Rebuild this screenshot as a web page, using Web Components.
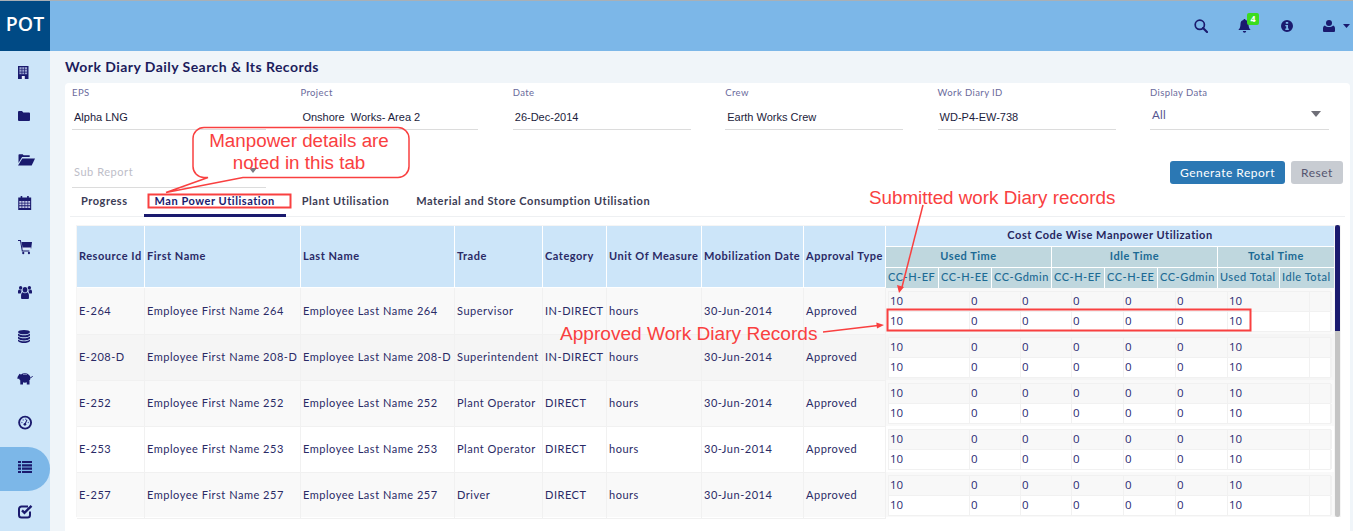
<!DOCTYPE html>
<html>
<head>
<meta charset="utf-8">
<title>Work Diary</title>
<style>
  html, body { margin: 0; height: 531px; overflow: hidden; background: #f0f5f9; }
  body { font-family: Lato, "Open Sans", sans-serif; color: #1a1a6e; }
</style>
</head>
<body>
<pot-app>
  <pot-topbar slot="top"></pot-topbar>
  <pot-sidebar slot="side"></pot-sidebar>
  <pot-card>
    <div slot="fields">
      <pot-field label="EPS">Alpha LNG</pot-field>
      <pot-field label="Project">Onshore&nbsp; Works- Area 2</pot-field>
      <pot-field label="Date">26-Dec-2014</pot-field>
      <pot-field label="Crew">Earth Works Crew</pot-field>
      <pot-field label="Work Diary ID">WD-P4-EW-738</pot-field>
      <pot-field label="Display Data" select>All</pot-field>
    </div>
    <pot-subreport slot="sub"></pot-subreport>
    <pot-button slot="actions" kind="primary">Generate Report</pot-button>
    <pot-button slot="actions" kind="plain">Reset</pot-button>
    <pot-tabs slot="tabs"></pot-tabs>
    <manpower-table slot="table"></manpower-table>
  </pot-card>
</pot-app>
<pot-notes></pot-notes>

<script>
const NAVY = '#1a1a6e';

class PotApp extends HTMLElement {
  constructor() {
    super();
    this.attachShadow({ mode: 'open' });
    this.shadowRoot.innerHTML = `
      <style>
        :host { display: grid; grid-template-columns: 50px 1fr; grid-template-rows: 1px 50px 480px; width: 1353px; height: 531px; }
        .strip { grid-column: 1 / 3; background: #a9b0b6; }
        .top { grid-column: 1 / 3; display: block; }
        .main { padding: 0 3px 0 15px; min-width: 0; }
        h1 { margin: 0; height: 32px; line-height: 32px; font-size: 14px; font-weight: 700; letter-spacing: .45px; color: #1c1c5c; }
      </style>
      <div class="strip"></div>
      <div class="top"><slot name="top"></slot></div>
      <slot name="side"></slot>
      <div class="main">
        <h1>Work Diary Daily Search &amp; Its Records</h1>
        <slot></slot>
      </div>`;
  }
}

class PotTopbar extends HTMLElement {
  constructor() {
    super();
    this.attachShadow({ mode: 'open' });
    this.shadowRoot.innerHTML = `
      <style>
        :host { display: flex; align-items: center; height: 50px; background: #7cb7e8; }
        .logo { width: 50px; height: 50px; background: #004a85; color: #fff; font: 600 19.500px/46px "Open Sans", sans-serif; text-align: center; flex: none; }
        .icons { margin-left: auto; display: flex; align-items: center; height: 50px; padding-right: 3px; }
        svg { display: block; fill: ${NAVY}; }
        .i { position: relative; }
        .search, .bell, .info { margin-right: 30px; }
        .user { margin-right: 8px; }
        .badge { position: absolute; left: 9px; top: -6px; width: 12px; height: 12px; border-radius: 2px; background: #3bdc1e; color: #fff; font: 700 9px/12px "Open Sans", sans-serif; text-align: center; }
      </style>
      <div class="logo">POT</div>
      <div class="icons">
        <div class="i search"><svg width="14" height="14" viewBox="0 0 14 14"><circle cx="5.8" cy="5.8" r="4.6" fill="none" stroke="${NAVY}" stroke-width="1.7"/><path d="M9 9l4 4" stroke="${NAVY}" stroke-width="2.1" stroke-linecap="round"/></svg></div>
        <div class="i bell"><svg width="13" height="14" viewBox="0 0 13 14"><path d="M6.5 0c.6 0 1 .4 1 1 2 .4 3 1.9 3 4 0 3.2.9 4.7 2.2 6H.3c1.300-1.300 2.200-2.800 2.200-6 0-2.100 1-3.600 3-4 0-.6.400-1 1-1z"/><path d="M4.800 12h3.400a1.700 1.700 0 0 1-3.400 0z"/></svg><span class="badge">4</span></div>
        <div class="i info"><svg width="12" height="12" viewBox="0 0 12 12"><path fill-rule="evenodd" d="M6 0a6 6 0 1 1 0 12A6 6 0 0 1 6 0zM4.800 2v1.800h2.400V2zM4.300 5v1.300h.9v2.200h-.9V10h3.500V8.500h-.8V5z"/></svg></div>
        <div class="i user"><svg width="12" height="12" viewBox="0 0 12 12"><circle cx="6" cy="3" r="3"/><path d="M1.800 5.400C3 6.700 4.300 7 6 7s3-.3 4.200-1.600c1.100.4 1.800 1.500 1.800 3.200V11a1 1 0 0 1-1 1H1a1 1 0 0 1-1-1V8.600c0-1.700.7-2.800 1.800-3.200z"/></svg></div>
        <div class="i"><svg width="7" height="4" viewBox="0 0 7 4"><path d="M0 0h7L3.500 4z"/></svg></div>
      </div>`;
  }
}

const SIDE_ICONS = [
  // building
  `<path d="M2 2h10.500v13H2z"/><path fill="#9aa3d0" d="M3.400 3.200h7.700v7H3.400z"/><path fill="${NAVY}" d="M5.600 3.200h.7v7h-.7zM8.200 3.200h.7v7h-.7zM3.400 5.400h7.700v.7H3.400zM3.400 7.700h7.700v.7H3.400z"/><path fill="#e8eefa" d="M5.800 12h3v3h-3z"/>`,
  // folder
  `<path d="M3 3h3l1.300 1.500H13a1 1 0 0 1 1 1V12a1 1 0 0 1-1 1H3a1 1 0 0 1-1-1V4a1 1 0 0 1 1-1z"/>`,
  // folder-open
  `<g transform="translate(2.500 .5)"><path d="M0 4V2.600a.8.800 0 0 1 .8-.8h3.400l.9 1h6.100v1.800H3.600L0 10.500z"/><path d="M4.300 6H17l-3.300 7H0z" transform="translate(-.5 0)"/></g>`,
  // calendar
  `<g transform="translate(1.500 -1) scale(.9 1)"><path d="M.8 2.500h14.400V15H.8z"/><path d="M3.500 1h1.800v3H3.500zM10.700 1h1.800v3h-1.800z"/><path fill="#c5cbe8" d="M2 6h2.500v1.700H2zM5.300 6h2.500v1.700H5.300zM8.600 6h2.500v1.700H8.600zM11.900 6H14v1.700h-2.100zM2 8.600h2.500v1.700H2zM5.300 8.600h2.500v1.700H5.300zM8.600 8.600h2.500v1.700H8.600zM11.900 8.600H14v1.700h-2.100zM2 11.200h2.500v1.700H2zM5.300 11.200h2.500v1.700H5.300zM8.600 11.200h2.500v1.700H8.600zM11.900 11.200H14v1.700h-2.100z"/></g>`,
  // cart
  `<g transform="translate(2 -.5) scale(.875 1)"><path d="M0 1h2.800l2.100 10.500H13" fill="none" stroke="${NAVY}" stroke-width="1.200"/><path d="M4 2.500h12l-1 6.800H5.400z"/><path fill="#dfe9f8" d="M5.300 8h9.500l-.3 1.700H5.600z"/><circle cx="6" cy="13.500" r="1.200"/><circle cx="12.500" cy="13.500" r="1.200"/></g>`,
  // users
  `<g transform="translate(2 0) scale(.875 1)"><circle cx="8" cy="5.800" r="2.700"/><circle cx="3" cy="3.800" r="1.900"/><circle cx="13" cy="3.800" r="1.900"/><path d="M3.500 14v-2.500c0-2 1-3 2-3.200.7.600 1.500.9 2.500.9s1.800-.3 2.500-.9c1 .2 2 1.200 2 3.200V14a1 1 0 0 1-1 1h-7a1 1 0 0 1-1-1z"/><path d="M0 9V7.500c0-1 .6-1.800 1.400-2 .4.400 1 .7 1.600.7h1C3.800 7 4 8 3 9.500H1a1 1 0 0 1-1-.5zM16 9V7.500c0-1-.6-1.800-1.400-2-.4.400-1 .7-1.600.7h-1c.2.800 0 1.800 1 3.300h2a1 1 0 0 0 1-.5z"/></g>`,
  // database
  `<g transform="translate(0 1.500) scale(1 .87)"><ellipse cx="8" cy="3" rx="6" ry="2.500"/><path d="M2 4.500C3 6 5.500 6.500 8 6.500s5-.5 6-2v2.300C13 8.300 10.500 9 8 9s-5-.7-6-2.200zM2 8C3 9.500 5.500 10 8 10s5-.5 6-2v2.300c-1 1.500-3.500 2.200-6 2.200s-5-.7-6-2.200zM2 11.500c1 1.500 3.500 2 6 2s5-.5 6-2v1.600c-1 1.500-3.500 2.400-6 2.400s-5-.9-6-2.400z"/></g>`,
  // piggy bank
  `<g transform="translate(.5 -1.500)"><ellipse cx="8.300" cy="7.500" rx="5.700" ry="4.700"/><path d="M3 3.300l3 1.700-2.500 3-2.500.6V6.500zM3.800 10.500h2.700v3.500H3.800zM10.300 10.500H13V14h-2.700z"/><path d="M14 7c1.200 0 1.800-.6 2-1.500" fill="none" stroke="${NAVY}" stroke-width="1"/><path fill="#9aa3d0" d="M6.500 3.700h4v.7h-4z"/></g>`,
  // tachometer
  `<g transform="translate(1.500 -1) scale(.95)"><circle cx="8" cy="8" r="6.300" fill="none" stroke="${NAVY}" stroke-width="2"/><path d="M8 9.500L10 5" stroke="${NAVY}" stroke-width="1.100"/><circle cx="7.800" cy="9.800" r="1.400"/><g fill="#5a68b8"><circle cx="4.600" cy="8" r=".8"/><circle cx="6" cy="5.200" r=".8"/><circle cx="8.600" cy="4.400" r=".8"/><circle cx="11.400" cy="8" r=".8"/></g></g>`,
  // list
  `<path d="M2 1h3v2.100H2zM6 1h10v2.100H6zM2 4.300h3v2.100H2zM6 4.300h10v2.100H6zM2 7.600h3v2.100H2zM6 7.600h10v2.100H6zM2 10.900h3V13H2zM6 10.900h10V13H6z"/>`,
  // check-square
  `<g transform="translate(1.500 -.5)"><path d="M12.500 8v3.500A2.500 2.500 0 0 1 10 14H4a2.500 2.500 0 0 1-2.500-2.500v-6A2.500 2.500 0 0 1 4 3h6.500" fill="none" stroke="${NAVY}" stroke-width="2"/><path d="M4.500 6.800L7 9.300 14 2.300" fill="none" stroke="${NAVY}" stroke-width="2.400"/></g>`
];

class PotSidebar extends HTMLElement {
  constructor() {
    super();
    this.attachShadow({ mode: 'open' });
    const items = SIDE_ICONS.map((p, i) =>
      `<div class="item${i === 9 ? ' on' : ''}"><svg width="16" height="16" viewBox="0 0 16 16">${p}</svg></div>`).join('');
    this.shadowRoot.innerHTML = `
      <style>
        :host { display: block; background: #cce5f9; overflow: hidden; }
        .item { height: 44px; box-sizing: border-box; padding: 13px 0 0 16px; }
        .on { background: #7cb7e8; border-radius: 0 22px 22px 0; }
        svg { display: block; fill: ${NAVY}; overflow: visible; }
      </style>
      ${items}`;
  }
}

class PotCard extends HTMLElement {
  constructor() {
    super();
    this.attachShadow({ mode: 'open' });
    this.shadowRoot.innerHTML = `
      <style>
        :host { display: block; background: #fff; border-radius: 4px 4px 0 0; height: 448px; box-sizing: border-box; padding: 3px 7px 0 7px; }
        ::slotted([slot=fields]) { display: grid; grid-template-columns: 194px 178px 178px 178px 178px 179px; column-gap: 34.400px; }
        .row { display: flex; height: 58px; padding-top: 31px; box-sizing: border-box; }
        .actions { margin-left: auto; display: flex; gap: 6px; height: 23px; }
      </style>
      <slot name="fields"></slot>
      <div class="row">
        <slot name="sub"></slot>
        <div class="actions"><slot name="actions"></slot></div>
      </div>
      <slot name="tabs"></slot>
      <slot name="table"></slot>`;
  }
}

class PotField extends HTMLElement {
  constructor() {
    super();
    this.attachShadow({ mode: 'open' });
    const sel = this.hasAttribute('select');
    this.shadowRoot.innerHTML = `
      <style>
        :host { display: block; position: relative; }
        .l { height: 12px; font: 400 9.500px/14px Lato, sans-serif; letter-spacing: .4px; color: #6a6a9c; }
        .v { height: 32px; box-sizing: border-box; border-bottom: 1px solid #dcdcdc; padding: 7px 0 0 2px; font: 400 11px/24px "${sel ? 'Lato' : 'Liberation Sans'}", sans-serif; color: ${sel ? '#55558f' : '#1c1c3c'}; ${sel ? 'line-height:20px;font-size:11.500px;letter-spacing:.3px;' : ''} }
        .c { position: absolute; right: 8px; top: 25px; width: 0; height: 0; border: 5px solid transparent; border-top: 6px solid #6f6f78; border-bottom: 0; }
      </style>
      <div class="l">${this.getAttribute('label')}</div>
      <div class="v"><slot></slot></div>
      ${sel ? '<div class="c"></div>' : ''}`;
  }
}

class PotSubreport extends HTMLElement {
  constructor() {
    super();
    this.attachShadow({ mode: 'open' });
    this.shadowRoot.innerHTML = `
      <style>
        :host { display: block; position: relative; width: 194px; height: 27px; box-sizing: border-box; border-bottom: 1px solid #dcdcdc; padding-left: 2px; font: 400 11px/22px Lato, sans-serif; letter-spacing: .55px; color: #bdbdc8; }
        i { position: absolute; left: 177px; top: 7px; width: 0; height: 0; border: 4px solid transparent; border-top: 5px solid #7a7a82; border-bottom: 0; }
      </style>
      Sub Report<i></i>`;
  }
}

class PotButton extends HTMLElement {
  constructor() {
    super();
    this.attachShadow({ mode: 'open' });
    const primary = this.getAttribute('kind') === 'primary';
    this.shadowRoot.innerHTML = `
      <style>
        :host { display: block; height: 23px; border-radius: 3px; box-sizing: border-box; text-align: center; font: 400 12px/23px Lato, sans-serif; letter-spacing: .5px;
          width: ${primary ? 115 : 52}px; background: ${primary ? '#2b78b4' : '#c8ccd2'}; color: ${primary ? '#fff' : '#55556f'}; }
      </style>
      <slot></slot>`;
  }
}

class PotTabs extends HTMLElement {
  constructor() {
    super();
    this.attachShadow({ mode: 'open' });
    const tabs = ['Progress', 'Man Power Utilisation', 'Plant Utilisation', 'Material and Store Consumption Utilisation'];
    this.shadowRoot.innerHTML = `
      <style>
        :host { display: flex; gap: 5px; margin: 0 -2px 0 -2px; height: 29px; box-sizing: border-box; border-bottom: 1px solid #eef0f2; }
        div { height: 29px; box-sizing: border-box; padding: 0 11px; font: 700 11px/26px Lato, sans-serif; letter-spacing: .54px; color: #3c3c55; }
        .on { color: ${NAVY}; border-bottom: 3px solid ${NAVY}; }
      </style>
      ${tabs.map((t, i) => `<div class="${i === 1 ? 'on' : ''}">${t}</div>`).join('')}`;
  }
}

const PEOPLE = [
  ['E-264', '264', 'Supervisor', 'IN-DIRECT', '#f9f9f9'],
  ['E-208-D', '208-D', 'Superintendent', 'IN-DIRECT', '#f5f5f5'],
  ['E-252', '252', 'Plant Operator', 'DIRECT', '#f9f9f9'],
  ['E-253', '253', 'Plant Operator', 'DIRECT', '#ffffff'],
  ['E-257', '257', 'Driver', 'DIRECT', '#f9f9f9']
];

class ManpowerTable extends HTMLElement {
  constructor() {
    super();
    this.attachShadow({ mode: 'open' });
    const heads = ['Resource Id', 'First Name', 'Last Name', 'Trade', 'Category', 'Unit Of Measure', 'Mobilization Date', 'Approval Type'];
    const codes = ['CC-H-EF', 'CC-H-EE', 'CC-Gdmin', 'CC-H-EF', 'CC-H-EE', 'CC-Gdmin', 'Used Total', 'Idle Total'];
    const line = `<div class="nr">${['10', '0', '0', '0', '0', '0', '10', ''].map(v => `<span>${v}</span>`).join('')}</div>`;
    const rows = PEOPLE.map((p, i) => `
      <div class="row" style="background:${p[4]}${i === 4 ? ';height:45px' : ''}">
        <div>${p[0]}</div><div>Employee First Name ${p[1]}</div><div>Employee Last Name ${p[1]}</div>
        <div>${p[2]}</div><div>${p[3]}</div><div>hours</div><div>30-Jun-2014</div><div>Approved</div>
        <div class="nest">${line}${line}</div>
      </div>`).join('');
    this.shadowRoot.innerHTML = `
      <style>
        :host { display: flex; margin: 8px 0 0 4px; width: 1265px; height: 292px; box-sizing: border-box; padding: 1px 1px 0 1px; background: #f5f5f5; font: 400 11px/16px Lato, sans-serif; letter-spacing: .52px; color: #2a2a66; }
        .tb { width: 1257px; flex: none; }
        .head, .row { display: grid; grid-template-columns: 68px 156px 154px 88px 64px 95px 102px 82px 448px; }
        .head { height: 62px; background: #fff; }
        .head > .h { background: #cce5f9; margin: 0 1px 1px 0; padding-left: 2px; line-height: 60px; font-weight: 700; white-space: nowrap; color: #2a2a66; overflow: visible; }
        .group { display: grid; grid-template-rows: 20px 20px 20px; row-gap: 1px; }
        .title { background: #cce5f9; text-align: center; font-weight: 700; line-height: 17px; color: #26265f; }
        .g3 { display: grid; grid-template-columns: 166px 166px 116px; }
        .g8 { display: grid; grid-template-columns: 53px 53px 60px 53px 53px 60px 62px 54px; }
        .g3 div, .g8 div { background: #bfd7de; margin-right: 1px; color: #1c6a94; font-weight: 500; white-space: nowrap; }
        .g3 div { text-align: center; line-height: 17px; font-weight: 700; }
        .g8 div { padding-left: 2px; line-height: 17px; }
        .g8 div:last-child, .g3 div:last-child { margin-right: 0; }
        .row { height: 46px; align-items: stretch; }
        .row > div { border-right: 1px solid #f1f1f1; border-bottom: 1px solid #f1f1f1; padding-left: 2px; line-height: 46px; white-space: nowrap; box-sizing: border-box; }
        .row > .nest { padding: 3px 0 0 2px; border: 0; line-height: 1; }
        .nr { display: grid; grid-template-columns: 81px 51px 51px 52px 52px 52px 82px 22px; width: 443px; height: 20px; background: #f8f8f8; box-sizing: border-box; border: 1px solid #f1f1f1; border-bottom: 0; }
        .nr + .nr { background: #fff; border-bottom: 1px solid #f1f1f1; height: 21px; }
        .nr span { padding-left: 1px; border-right: 1px solid #f1f1f1; font: 400 11.500px/18px "Open Sans", sans-serif; letter-spacing: 0; color: #2a2a72; }
        .bar { width: 5px; margin-left: 1px; height: 292px; background: #c4c4c4; border-radius: 0 0 3px 3px; margin-top: -1px; }
        .bar i { display: block; height: 106px; background: ${NAVY}; border-radius: 3px 3px 0 0; }
      </style>
      <div class="tb">
        <div class="head">
          ${heads.map(h => `<div class="h">${h}</div>`).join('')}
          <div class="group">
            <div class="title">Cost Code Wise Manpower Utilization</div>
            <div class="g3"><div>Used Time</div><div>Idle Time</div><div>Total Time</div></div>
            <div class="g8">${codes.map(c => `<div>${c}</div>`).join('')}</div>
          </div>
        </div>
        ${rows}
      </div>
      <div class="bar"><i></i></div>`;
  }
}

// red annotations drawn on top of the screenshot
class PotNotes extends HTMLElement {
  constructor() {
    super();
    this.attachShadow({ mode: 'open' });
    const red = '#f94040';
    this.shadowRoot.innerHTML = `
      <style>
        :host { display: block; position: absolute; left: 0; top: 0; width: 1353px; height: 531px; pointer-events: none; }
        svg { position: absolute; left: 0; top: 0; }
        span { position: absolute; font: 400 18.800px/22px "Liberation Sans", sans-serif; color: ${red}; white-space: nowrap; }
        .c { text-align: center; width: 216px; left: 191px; }
      </style>
      <svg width="1353" height="531" viewBox="0 0 1353 531" fill="none" stroke="${red}">
        <path stroke-width="1.500" d="M204 127.500h194a11 11 0 0 1 11 11v28a11 11 0 0 1-11 11H243L166 192.500 208 177.500h-4a11 11 0 0 1-11-11v-28a11 11 0 0 1 11-11z"/>
        <rect x="148.500" y="194.500" width="142" height="13" stroke-width="2"/>
        <rect x="887.500" y="309.500" width="363" height="21" stroke-width="2"/>
        <path stroke-width="1.500" d="M923 205L902 287"/>
        <path fill="${red}" stroke="none" d="M899 293l-2-8 7 2z"/>
        <path stroke-width="1.500" d="M823 332L878 325.500"/>
        <path fill="${red}" stroke="none" d="M884 325l-7 3.500-.7-6z"/>
      </svg>
      <span class="c" style="top:130px">Manpower details are</span>
      <span class="c" style="top:152px">noted in this tab</span>
      <span style="left:869px;top:187px">Submitted work Diary records</span>
      <span style="left:560px;top:323px;font-size:19.100px">Approved Work Diary Records</span>`;
  }
}

customElements.define('pot-app', PotApp);
customElements.define('pot-topbar', PotTopbar);
customElements.define('pot-sidebar', PotSidebar);
customElements.define('pot-card', PotCard);
customElements.define('pot-field', PotField);
customElements.define('pot-subreport', PotSubreport);
customElements.define('pot-button', PotButton);
customElements.define('pot-tabs', PotTabs);
customElements.define('manpower-table', ManpowerTable);
customElements.define('pot-notes', PotNotes);
</script>
</body>
</html>
